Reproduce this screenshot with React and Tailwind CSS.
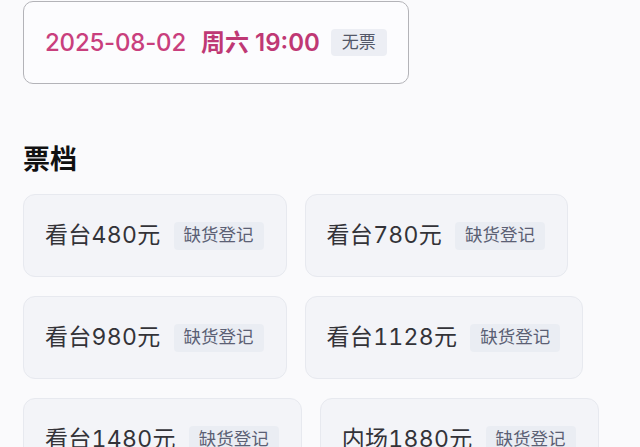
import React from "react";

const tickets = [
  "看台480元",
  "看台780元",
  "看台980元",
  "看台1128元",
  "看台1480元",
  "内场1880元",
];

const App = () => {
  return (
    <div
      className="min-h-screen w-full overflow-hidden bg-[#fafafc] pl-[23px] pt-px"
      style={{ fontFamily: '"Inter", "Noto Sans CJK SC", sans-serif' }}
    >
      {/* Session */}
      <div className="inline-flex h-[83px] items-center rounded-[10px] border border-[#b3b3b8] bg-[#fcfcfe] px-[21px]">
        <span className="text-[24px] font-medium tracking-[-0.2px] text-[#c93f7d]">2025-08-02</span>
        <span className="ml-[15px] text-[24px] font-semibold text-[#bf3874]">周六 19:00</span>
        <span className="ml-[11px] flex h-[27px] items-center rounded-[4px] bg-[#eceef4] px-[11px] text-[17px] text-[#545868]">
          无票
        </span>
      </div>

      {/* Tiers */}
      <h2 className="mt-[59px] text-[27px] font-bold leading-[33px] text-[#111111]">票档</h2>

      <div className="mt-[18px] flex flex-wrap gap-x-[18px] gap-y-[19px] pr-4 tabular-nums">
        {tickets.map((t) => (
          <div
            key={t}
            className="flex h-[83px] items-center rounded-[12px] border border-[#e7e9ef] bg-[#f3f4f8] pl-[21px] pr-[22px]"
          >
            <span className="text-[23px] tracking-[0.3px] text-[#333338]">{t}</span>
            <span className="ml-[13px] flex h-[28px] items-center rounded-[4px] bg-[#eaedf3] px-[10px] text-[17.5px] text-[#5b6074]">
              缺货登记
            </span>
          </div>
        ))}
      </div>
    </div>
  );
};

export default App;
